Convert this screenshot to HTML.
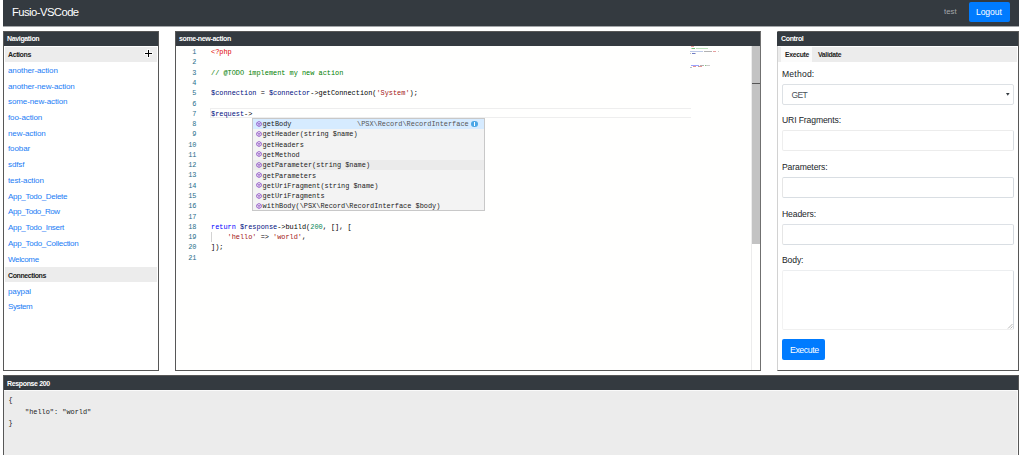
<!DOCTYPE html>
<html><head><meta charset="utf-8">
<style>
*{box-sizing:border-box;margin:0;padding:0}
html,body{width:1024px;height:455px;overflow:hidden;background:#fff;font-family:"Liberation Sans",sans-serif}
.abs{position:absolute}
.dark{background:#343a40}
.panel{position:absolute;border:1px solid #575757;background:#fff}
.ph{position:absolute;left:0;top:0;right:0;height:14px;background:#343a40;color:#fff;font-weight:bold;font-size:7px;line-height:14px;padding-left:3px;letter-spacing:-0.35px}
.t{position:absolute;white-space:pre}
.nav a{position:absolute;left:4px;color:#1a7cf5;font-size:8px;letter-spacing:-0.1px;text-decoration:none;white-space:pre}
.sec{position:absolute;left:1px;right:1px;height:15px;background:#ececec;font-weight:bold;font-size:7px;letter-spacing:-0.4px;color:#222;line-height:15px;padding-left:3px}
.code{font-family:"Liberation Mono",monospace;font-size:6.9px;line-height:10.27px;white-space:pre}
.ln{position:absolute;left:0;width:20.5px;text-align:right;color:#1f6e8a}
.cl{position:absolute;left:35px}
.v{color:#001080}.s{color:#a31515}.c{color:#008000}.k{color:#0000ff}.n{color:#098658}.r{color:#e00000}
.lbl{position:absolute;left:4px;font-size:8.6px;color:#212529;letter-spacing:-0.12px;white-space:pre}
.inp{position:absolute;left:4px;width:232px;height:21px;border:1px solid #dde1e5;border-radius:2px;background:#fff}
.sug{position:absolute;left:0;right:0;height:10.3px}
.ic{position:absolute;left:2.5px;top:1.5px;width:6px;height:6px}
</style></head><body>
<!-- top navbar -->
<div class="abs dark" style="left:3px;top:0;width:1016px;height:26px;box-shadow:0 1px 0 rgba(52,58,64,0.45)"></div>
<div class="t" style="left:12px;top:5px;color:#fff;font-size:11.25px;letter-spacing:-0.55px;line-height:14px">Fusio-VSCode</div>
<div class="t" style="left:944px;top:6.5px;color:#a4a8ac;font-size:7.8px;letter-spacing:0px;line-height:10px">test</div>
<div class="abs" style="left:969px;top:2px;width:41px;height:20px;background:#007bff;border-radius:2px"></div>
<div class="t" style="left:976px;top:7px;color:#fff;font-size:8.6px;letter-spacing:-0.1px;line-height:10px">Logout</div>

<!-- navigation panel -->
<div class="panel nav" style="left:3px;top:31px;width:156px;height:340px">
  <div class="ph">Navigation</div>
  <div class="sec" style="top:15px">Actions<span class="abs" style="left:139px;top:5px;width:9px;height:3px;background:#fafafa"></span><span class="abs" style="left:142px;top:2px;width:3px;height:9px;background:#fafafa"></span><span class="abs" style="left:140px;top:6px;width:7px;height:1px;background:#000"></span><span class="abs" style="left:143px;top:3px;width:1px;height:7px;background:#000"></span></div>
  <a style="top:33.96px">another-action</a>
  <a style="top:49.66px">another-new-action</a>
  <a style="top:65.36px">some-new-action</a>
  <a style="top:81.06px">foo-action</a>
  <a style="top:96.76px">new-action</a>
  <a style="top:112.46px">foobar</a>
  <a style="top:128.16px">sdfsf</a>
  <a style="top:143.86px">test-action</a>
  <a style="top:159.56px;letter-spacing:-0.3px">App_Todo_Delete</a>
  <a style="top:175.26px;letter-spacing:-0.4px">App_Todo_Row</a>
  <a style="top:190.96px;letter-spacing:-0.3px">App_Todo_Insert</a>
  <a style="top:206.66px;letter-spacing:-0.27px">App_Todo_Collection</a>
  <a style="top:222.96px;letter-spacing:-0.35px">Welcome</a>
  <div class="sec" style="top:235.3px"><span style="position:relative;top:0.8px">Connections</span></div>
  <a style="top:254.66px">paypal</a>
  <a style="top:270.06px;letter-spacing:-0.4px">System</a>
</div>

<!-- editor panel -->
<div class="panel" style="left:175px;top:31px;width:586px;height:340px;background:#fffffe;border-right-color:#707070">
  <div class="ph">some-new-action</div>
  <!-- current line highlight -->
  <div class="abs" style="left:34px;top:76px;width:481px;height:10px;border:1px solid #eeeeee;border-right:0"></div>
  <div class="abs code" style="left:0;top:15.2px;width:515px;height:322px">
    <div class="ln" style="top:0">1</div><div class="cl r" style="top:0">&lt;?php</div>
    <div class="ln" style="top:10.27px">2</div>
    <div class="ln" style="top:20.54px">3</div><div class="cl c" style="top:20.54px">// @TODO implement my new action</div>
    <div class="ln" style="top:30.81px">4</div>
    <div class="ln" style="top:41.08px">5</div><div class="cl" style="top:41.08px"><span class="v">$connection</span> = <span class="v">$connector</span>-&gt;getConnection(<span class="s">'System'</span>);</div>
    <div class="ln" style="top:51.35px">6</div>
    <div class="ln" style="top:61.62px">7</div><div class="cl" style="top:61.62px"><span class="v">$request</span>-&gt;</div>
    <div class="ln" style="top:71.89px">8</div>
    <div class="ln" style="top:82.16px">9</div>
    <div class="ln" style="top:92.43px">10</div>
    <div class="ln" style="top:102.7px">11</div>
    <div class="ln" style="top:112.97px">12</div>
    <div class="ln" style="top:123.24px">13</div>
    <div class="ln" style="top:133.51px">14</div>
    <div class="ln" style="top:143.78px">15</div>
    <div class="ln" style="top:154.05px">16</div>
    <div class="ln" style="top:164.32px">17</div>
    <div class="ln" style="top:174.59px">18</div><div class="cl" style="top:174.59px"><span class="k">return</span> <span class="v">$response</span>-&gt;build(<span class="n">200</span>, [], [</div>
    <div class="ln" style="top:184.86px">19</div><div class="cl" style="top:184.86px">    <span class="s">'hello'</span> =&gt; <span class="s">'world'</span>,</div>
    <div class="ln" style="top:195.13px">20</div><div class="cl" style="top:195.13px">]);</div>
    <div class="ln" style="top:205.4px">21</div>
  </div>
  <!-- indent guide -->
  <div class="abs" style="left:35px;top:200px;width:1px;height:10px;background:#d3d3d3"></div>
  <!-- suggest widget -->
  <div class="abs code" style="left:76px;top:86px;width:233px;height:93px;background:#f3f3f3;border:1px solid #c8c8c8;color:#222">
    <div class="sug" style="top:0;background:#d6ebff"><svg class="ic" viewBox="0 0 12 12"><path d="M6 1L10.5 3.5V8.5L6 11L1.5 8.5V3.5Z M3 4.2L6 6L9 4.2 M6 6V9.5" fill="none" stroke="#8e4ec6" stroke-width="1.7"/></svg><span class="abs" style="left:9.5px;top:0">getBody</span><span class="abs" style="left:104px;top:0;color:#555">\PSX\Record\RecordInterface</span><span class="abs" style="left:218px;top:1.5px;width:6.6px;height:6.6px;border-radius:50%;background:#4aa6e6"></span><span class="abs" style="left:221px;top:2.8px;width:0.9px;height:3.8px;background:#fff"></span></div>
    <div class="sug" style="top:10.3px"><svg class="ic" viewBox="0 0 12 12"><path d="M6 1L10.5 3.5V8.5L6 11L1.5 8.5V3.5Z M3 4.2L6 6L9 4.2 M6 6V9.5" fill="none" stroke="#8e4ec6" stroke-width="1.7"/></svg><span class="abs" style="left:9.5px;top:0">getHeader(string $name)</span></div>
    <div class="sug" style="top:20.6px"><svg class="ic" viewBox="0 0 12 12"><path d="M6 1L10.5 3.5V8.5L6 11L1.5 8.5V3.5Z M3 4.2L6 6L9 4.2 M6 6V9.5" fill="none" stroke="#8e4ec6" stroke-width="1.7"/></svg><span class="abs" style="left:9.5px;top:0">getHeaders</span></div>
    <div class="sug" style="top:30.9px"><svg class="ic" viewBox="0 0 12 12"><path d="M6 1L10.5 3.5V8.5L6 11L1.5 8.5V3.5Z M3 4.2L6 6L9 4.2 M6 6V9.5" fill="none" stroke="#8e4ec6" stroke-width="1.7"/></svg><span class="abs" style="left:9.5px;top:0">getMethod</span></div>
    <div class="sug" style="top:41.2px;background:#ebebeb"><svg class="ic" viewBox="0 0 12 12"><path d="M6 1L10.5 3.5V8.5L6 11L1.5 8.5V3.5Z M3 4.2L6 6L9 4.2 M6 6V9.5" fill="none" stroke="#8e4ec6" stroke-width="1.7"/></svg><span class="abs" style="left:9.5px;top:0">getParameter(string $name)</span></div>
    <div class="sug" style="top:51.5px"><svg class="ic" viewBox="0 0 12 12"><path d="M6 1L10.5 3.5V8.5L6 11L1.5 8.5V3.5Z M3 4.2L6 6L9 4.2 M6 6V9.5" fill="none" stroke="#8e4ec6" stroke-width="1.7"/></svg><span class="abs" style="left:9.5px;top:0">getParameters</span></div>
    <div class="sug" style="top:61.8px"><svg class="ic" viewBox="0 0 12 12"><path d="M6 1L10.5 3.5V8.5L6 11L1.5 8.5V3.5Z M3 4.2L6 6L9 4.2 M6 6V9.5" fill="none" stroke="#8e4ec6" stroke-width="1.7"/></svg><span class="abs" style="left:9.5px;top:0">getUriFragment(string $name)</span></div>
    <div class="sug" style="top:72.1px"><svg class="ic" viewBox="0 0 12 12"><path d="M6 1L10.5 3.5V8.5L6 11L1.5 8.5V3.5Z M3 4.2L6 6L9 4.2 M6 6V9.5" fill="none" stroke="#8e4ec6" stroke-width="1.7"/></svg><span class="abs" style="left:9.5px;top:0">getUriFragments</span></div>
    <div class="sug" style="top:82.4px"><svg class="ic" viewBox="0 0 12 12"><path d="M6 1L10.5 3.5V8.5L6 11L1.5 8.5V3.5Z M3 4.2L6 6L9 4.2 M6 6V9.5" fill="none" stroke="#8e4ec6" stroke-width="1.7"/></svg><span class="abs" style="left:9.5px;top:0">withBody(\PSX\Record\RecordInterface $body)</span></div>
  </div>
  <!-- minimap --><div class="abs" style="left:0;top:0;opacity:0.75">
  <div class="abs" style="left:514.5px;top:14px;width:3px;height:1px;background:#f08080"></div>
  <div class="abs" style="left:515px;top:16.3px;width:1.5px;height:1px;background:#b0d0b0"></div>
  <div class="abs" style="left:516px;top:16.3px;width:3px;height:1.1px;background:#4caf50"></div>
  <div class="abs" style="left:520px;top:16.3px;width:12px;height:1px;background:#a8d8a8"></div>
  <div class="abs" style="left:514px;top:19px;width:13px;height:1.2px;background:#a8b8e0"></div>
  <div class="abs" style="left:528px;top:19px;width:8px;height:1.2px;background:#999"></div>
  <div class="abs" style="left:537px;top:19px;width:3px;height:1.2px;background:#e08080"></div>
  <div class="abs" style="left:541.5px;top:19px;width:1px;height:1.2px;background:#bbb"></div>
  <div class="abs" style="left:514px;top:21.2px;width:1px;height:1px;background:#aaa"></div>
  <div class="abs" style="left:515.5px;top:21.2px;width:3px;height:1px;background:#3f51b5"></div>
  <div class="abs" style="left:518.5px;top:21.2px;width:1.5px;height:1px;background:#aab"></div>
  <div class="abs" style="left:515px;top:33px;width:8px;height:1.2px;background:#7a86ff"></div>
  <div class="abs" style="left:524px;top:33px;width:4px;height:1.2px;background:#999"></div>
  <div class="abs" style="left:528.5px;top:32.8px;width:1px;height:1.4px;background:#5cb85c"></div>
  <div class="abs" style="left:529.5px;top:33px;width:4px;height:1.2px;background:#bbb"></div>
  <div class="abs" style="left:517px;top:34.2px;width:3px;height:1px;background:#e07070"></div>
  <div class="abs" style="left:521.5px;top:34.2px;width:1px;height:1px;background:#888"></div>
  <div class="abs" style="left:523px;top:34.2px;width:3px;height:1px;background:#e07070"></div>
  <div class="abs" style="left:514px;top:35.3px;width:2px;height:1px;background:#aaa"></div>
  </div>
  <!-- scrollbar -->
  <div class="abs" style="left:575px;top:14px;width:9px;height:324px;border-left:1px solid #ececec"></div>
  <div class="abs" style="left:576px;top:14px;width:8px;height:198px;background:#c3c3c3"></div>
  <div class="abs" style="left:576px;top:51px;width:8px;height:1px;background:#555"></div>
</div>

<!-- control panel -->
<div class="panel" style="left:777px;top:31px;width:242px;height:340px;border-left-color:#d2d2d2">
  <div class="ph" style="left:-1px;padding-left:4px">Control</div>
  <div class="abs" style="left:0;top:15px;width:239px;height:15px;background:#ececec"></div>
  <div class="abs" style="left:3px;top:15px;width:31px;height:15px;background:#fbfbfb"></div>
  <div class="t" style="left:7px;top:18px;font-size:6.8px;font-weight:bold;color:#222;letter-spacing:-0.3px;line-height:10px">Execute</div>
  <div class="t" style="left:40px;top:18px;font-size:6.8px;font-weight:bold;color:#222;letter-spacing:-0.3px;line-height:10px">Validate</div>
  <div class="lbl" style="top:37px;line-height:10px;letter-spacing:0.2px">Method:</div>
  <div class="inp" style="top:52px"><span class="t" style="left:8.5px;top:5px;font-size:8.5px;letter-spacing:-0.65px;line-height:10px;color:#495057">GET</span><svg class="abs" style="left:223.3px;top:8.2px" width="4" height="3" viewBox="0 0 4 3"><path d="M0 0H3.6L1.8 2.8Z" fill="#343a40"/></svg></div>
  <div class="lbl" style="top:83px;line-height:10px">URI Fragments:</div>
  <div class="inp" style="top:98px;border-color:#ececec #d8dde2 #ececec #eeeeee"></div>
  <div class="lbl" style="top:130px;line-height:10px">Parameters:</div>
  <div class="inp" style="top:145px;border-color:#d9dee3 #d5dae0 #d9dee3 #e6e6e6"></div>
  <div class="lbl" style="top:177px;line-height:10px">Headers:</div>
  <div class="inp" style="top:192px;border-color:#dde1e6 #d5dae0 #d9dee3 #e6e6e6"></div>
  <div class="lbl" style="top:223px;line-height:10px">Body:</div>
  <div class="inp" style="top:238px;height:60px;border-color:#eceef0 #d5dae0 #f0f0f0 #f2f2f2"><svg class="abs" style="right:0;bottom:0" width="6" height="6" viewBox="0 0 6 6"><path d="M1 5.5L5.5 1M3.5 5.5L5.5 3.5" stroke="#999" stroke-width="0.7"/></svg></div>
  <div class="abs" style="left:4px;top:307px;width:43px;height:21px;background:#007bff;border-radius:2px"></div>
  <div class="t" style="left:12px;top:312.5px;color:#fff;font-size:8.8px;letter-spacing:-0.45px;line-height:10px">Execute</div>
</div>

<!-- response panel -->
<div class="panel" style="left:3px;top:375px;width:1016px;height:90px;background:#ececec">
  <div class="ph" style="height:14px;line-height:15px">Response 200</div><div class="abs" style="left:0;top:14px;width:1014px;height:1px;background:#fafafa"></div><div class="abs" style="right:0;top:14px;width:1px;height:80px;background:#fafafa"></div>
  <div class="abs code" style="left:4.5px;top:19px;line-height:11.5px;color:#222">{
    "hello": "world"
}</div>
</div>
</body></html>
